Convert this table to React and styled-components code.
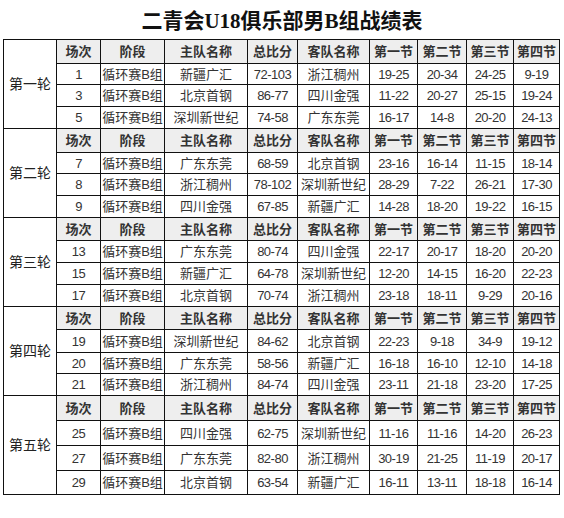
import React from "react";
import styled, { createGlobalStyle } from "styled-components";

const Global = createGlobalStyle`
  html, body { margin: 0; padding: 0; background: #fff; }
  body { font-family: "Liberation Sans", "Noto Sans CJK SC", sans-serif; }
`;

const Page = styled.div`
  width: 564px;
  height: 518px;
  display: flex;
  flex-direction: column;
  align-items: flex-start;
`;

const Title = styled.h1`
  margin: 0;
  width: 564px;
  height: 35px;
  padding-top: 4px;
  line-height: 35px;
  text-align: center;
  font-family: "Liberation Serif", "Noto Sans CJK SC", serif;
  font-weight: bold;
  font-size: 21px;
  color: #111;
`;

const Table = styled.table`
  margin-left: 3px;
  border-collapse: collapse;
  table-layout: fixed;
  width: 557px;
  color: #333;
`;

const Row = styled.tr`
  height: ${(p) => p.$h}px;
`;

const Cell = styled.td`
  border: 1px solid #111;
  padding: 0;
  text-align: center;
  vertical-align: middle;
  font-size: 13px;
  letter-spacing: ${(p) => (p.$num ? "-0.5px" : "0")};
  white-space: nowrap;
  overflow: hidden;
  line-height: 13px;
`;

const HeadCell = styled.th`
  border: 1px solid #111;
  padding: 0;
  background: #eeeeee;
  font-size: 13px;
  font-weight: bold;
  color: #333;
  text-align: center;
  vertical-align: middle;
  white-space: nowrap;
  line-height: 13px;
`;

const RoundCell = styled.td`
  border: 1px solid #111;
  padding: 0;
  background: #fff;
  font-size: 14px;
  line-height: 14px;
  color: #222;
  text-align: center;
  vertical-align: middle;
  white-space: nowrap;
`;

const widths = [53, 44, 64, 83, 50, 72, 48, 49, 47, 46];
const headers = ["场次", "阶段", "主队名称", "总比分", "客队名称", "第一节", "第二节", "第三节", "第四节"];

const sections = [
  {
    round: "第一轮",
    head: 24,
    rows: [
      [21, ["1", "循环赛B组", "新疆广汇", "72-103", "浙江稠州", "19-25", "20-34", "24-25", "9-19"]],
      [22, ["3", "循环赛B组", "北京首钢", "86-77", "四川金强", "11-22", "20-27", "25-15", "19-24"]],
      [22, ["5", "循环赛B组", "深圳新世纪", "74-58", "广东东莞", "16-17", "14-8", "20-20", "24-13"]],
    ],
  },
  {
    round: "第二轮",
    head: 24,
    rows: [
      [21, ["7", "循环赛B组", "广东东莞", "68-59", "北京首钢", "23-16", "16-14", "11-15", "18-14"]],
      [22, ["8", "循环赛B组", "浙江稠州", "78-102", "深圳新世纪", "28-29", "7-22", "26-21", "17-30"]],
      [22, ["9", "循环赛B组", "四川金强", "67-85", "新疆广汇", "14-28", "18-20", "19-22", "16-15"]],
    ],
  },
  {
    round: "第三轮",
    head: 23,
    rows: [
      [22, ["13", "循环赛B组", "广东东莞", "80-74", "四川金强", "22-17", "20-17", "18-20", "20-20"]],
      [22, ["15", "循环赛B组", "新疆广汇", "64-78", "深圳新世纪", "12-20", "14-15", "16-20", "22-23"]],
      [22, ["17", "循环赛B组", "北京首钢", "70-74", "浙江稠州", "23-18", "18-11", "9-29", "20-16"]],
    ],
  },
  {
    round: "第四轮",
    head: 23,
    rows: [
      [23, ["19", "循环赛B组", "深圳新世纪", "84-62", "北京首钢", "22-23", "9-18", "34-9", "19-12"]],
      [21, ["20", "循环赛B组", "广东东莞", "58-56", "新疆广汇", "16-18", "16-10", "12-10", "14-18"]],
      [22, ["21", "循环赛B组", "浙江稠州", "84-74", "四川金强", "23-11", "21-18", "23-20", "17-25"]],
    ],
  },
  {
    round: "第五轮",
    head: 25,
    rows: [
      [25, ["25", "循环赛B组", "四川金强", "62-75", "深圳新世纪", "11-16", "11-16", "14-20", "26-23"]],
      [25, ["27", "循环赛B组", "广东东莞", "82-80", "浙江稠州", "30-19", "21-25", "11-19", "20-17"]],
      [24, ["29", "循环赛B组", "北京首钢", "63-54", "新疆广汇", "16-11", "13-11", "18-18", "16-14"]],
    ],
  },
];

const isNum = (s) => /^[0-9-]+$/.test(s);

export default function App() {
  return (
    <Page>
      <Global />
      <Title>二青会U18俱乐部男B组战绩表</Title>
      <Table>
        <colgroup>
          {widths.map((w, i) => (
            <col key={i} style={{ width: w }} />
          ))}
        </colgroup>
        <tbody>
          {sections.map((s) => (
            <React.Fragment key={s.round}>
              <Row $h={s.head}>
                <RoundCell rowSpan={4}>{s.round}</RoundCell>
                {headers.map((h) => (
                  <HeadCell key={h}>{h}</HeadCell>
                ))}
              </Row>
              {s.rows.map(([h, cells]) => (
                <Row key={cells[0]} $h={h}>
                  {cells.map((c, i) => (
                    <Cell key={i} $num={isNum(c)}>{c}</Cell>
                  ))}
                </Row>
              ))}
            </React.Fragment>
          ))}
        </tbody>
      </Table>
    </Page>
  );
}
